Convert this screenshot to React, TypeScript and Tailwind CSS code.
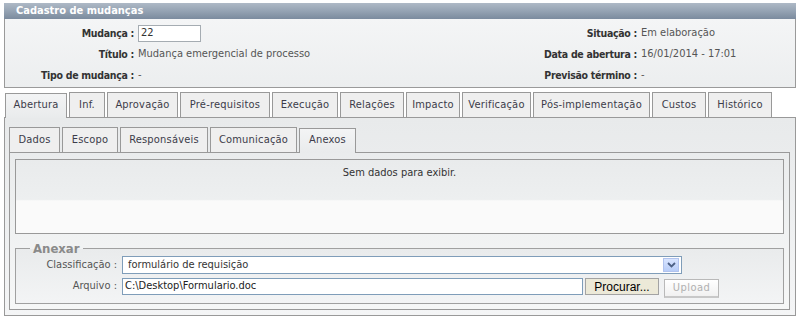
import React from "react";

type Tab = { label: string; w: string; active?: boolean };

const mainTabs: Tab[] = [
  { label: "Abertura", w: "w-[62px]", active: true },
  { label: "Inf.", w: "w-[36px]" },
  { label: "Aprovação", w: "w-[71px]" },
  { label: "Pré-requisitos", w: "w-[90px]" },
  { label: "Execução", w: "w-[66px]" },
  { label: "Relações", w: "w-[64px]" },
  { label: "Impacto", w: "w-[54px]" },
  { label: "Verificação", w: "w-[69px]" },
  { label: "Pós-implementação", w: "w-[117px]" },
  { label: "Custos", w: "w-[54px]" },
  { label: "Histórico", w: "w-[64px]" },
];

const subTabs: Tab[] = [
  { label: "Dados", w: "w-[51px]" },
  { label: "Escopo", w: "w-[56px]" },
  { label: "Responsáveis", w: "w-[88px]" },
  { label: "Comunicação", w: "w-[87px]" },
  { label: "Anexos", w: "w-[57px]", active: true },
];

function TabStrip({ tabs, h }: { tabs: Tab[]; h: string }) {
  return (
    <div className="flex items-end gap-[2px]">
      {tabs.map((t) =>
        t.active ? (
          <div
            key={t.label}
            className={`${t.w} ${h} relative z-10 -mb-px flex items-center justify-center border-x border-t border-[#999999] bg-gradient-to-b from-[#f3f4f5] to-[#e9ebec] pb-px tracking-[0.2px] text-[#3c3c4a]`}
          >
            {t.label}
          </div>
        ) : (
          <div
            key={t.label}
            className={`${t.w} ${h} flex items-center justify-center border-x border-t border-[#999999] bg-[#efefef] tracking-[0.2px] text-[#3c3c4a]`}
          >
            {t.label}
          </div>
        )
      )}
    </div>
  );
}

const lbl = "flex items-center justify-end whitespace-nowrap text-[10.5px] font-bold tracking-[-0.3px] text-[#333333]";
const val = "flex items-center text-[#555555]";

export default function App() {
  return (
    <div className="h-[319px] w-[800px] overflow-hidden bg-white pt-[3px] pl-[4px] font-['DejaVu_Sans_Condensed','DejaVu_Sans',sans-serif] text-[11px] text-[#333333]">
      <div className="w-[792px]">
        {/* Header */}
        <div className="h-[16px] bg-gradient-to-b from-[#aeb9c6] via-[#95a3b3] to-[#7b8b9e] pl-[12px] text-[11px] font-bold leading-[16px] text-white">
          Cadastro de mudanças
        </div>
        {/* Info panel */}
        <div className="grid h-[69px] grid-cols-[129px_395px_100px_1fr] auto-rows-[21px] gap-x-[4px] border-x border-b border-[#9a9a9a] bg-gradient-to-b from-[#f4f5f6] to-[#eceeef] pt-[4px]">
          <div className={lbl}>Mudança :</div>
          <div className="flex items-center">
            <div className="flex h-[17px] w-[63px] items-center border border-[#a5acb2] bg-white px-[2px] text-[#333]">
              22
            </div>
          </div>
          <div className={lbl}>Situação :</div>
          <div className={val}>Em elaboração</div>

          <div className={lbl}>Título :</div>
          <div className={val}>Mudança emergencial de processo</div>
          <div className={lbl}>Data de abertura :</div>
          <div className={val}>16/01/2014 - 17:01</div>

          <div className={lbl}>Tipo de mudança :</div>
          <div className={val}>-</div>
          <div className={lbl}>Previsão término :</div>
          <div className={val}>-</div>
        </div>

        {/* Main tabs */}
        <div className="mt-[4px] pl-px">
          <TabStrip tabs={mainTabs} h="h-[25px]" />
        </div>
        <div className="h-[199px] border border-[#999999] bg-gradient-to-b from-[#e8eaeb] to-[#f4f5f6] pt-[9px] pr-[5px] pl-[4px]">
          <TabStrip tabs={subTabs} h="h-[25px]" />
          <div className="h-[158px] border border-[#999999] bg-gradient-to-b from-[#eaeced] to-[#f6f7f7] pt-[6px] pr-[5px] pl-[5px]">
            {/* Data grid */}
            <div className="h-[75px] border border-[#999999] bg-[linear-gradient(to_bottom,#e9ebec_0%,#edeff0_54%,#fafafa_56%,#fafafa_100%)]">
              <div className="pt-[5px] text-center text-[#333333]">Sem dados para exibir.</div>
            </div>
            <div className="h-[8px]" />
            {/* Anexar fieldset */}
            <fieldset className="m-0 h-[62px] border border-[#a0a0a0] bg-gradient-to-b from-[#e9ebec] to-[#f3f4f5] p-0">
              <legend className="ml-[14px] px-[3px] text-[13px] leading-[13px] font-bold text-[#8a8a8a]">
                Anexar
              </legend>
              <div className="grid grid-cols-[101px_1fr] gap-x-[5px] gap-y-[4px] pt-[1px]">
                <div className="flex h-[18px] items-center justify-end text-[#555555]">Classificação :</div>
                <div className="flex h-[18px] w-[560px] items-center border border-[#7f9db9] bg-white pl-[5px] pr-[2px] text-[#333333]">
                  <span className="flex-1">formulário de requisição</span>
                  <div className="flex h-[14px] w-[16px] items-center justify-center border border-[#b1c3ee] bg-gradient-to-b from-[#d9e5ff] to-[#b8cdf8]">
                    <svg width="9" height="6" viewBox="0 0 9 6">
                      <path d="M1 1 L4.5 4.5 L8 1" fill="none" stroke="#4d6185" strokeWidth="1.8" />
                    </svg>
                  </div>
                </div>

                <div className="flex h-[17px] items-center justify-end text-[#555555]">Arquivo :</div>
                <div className="flex items-start">
                  <div className="flex h-[17px] w-[461px] items-center border border-[#7f9db9] bg-white pl-[2px] text-[#222]">
                    C:\Desktop\Formulario.doc
                  </div>
                  <div className="ml-[2px] flex h-[17px] w-[74px] items-center justify-center border border-[#a3a3a3] bg-[#ece9d8] font-['Liberation_Sans',sans-serif] text-[12px] text-black">
                    Procurar...
                  </div>
                  <div className="ml-[5px] mt-px flex h-[19px] w-[55px] items-center justify-center border border-[#b9b9b9] border-b-[2px] border-b-[#c8c8c8] bg-gradient-to-b from-white to-[#f1f1f1] tracking-[0.5px] text-[#b0b0b0]">
                    Upload
                  </div>
                </div>
              </div>
            </fieldset>
          </div>
        </div>
      </div>
    </div>
  );
}
